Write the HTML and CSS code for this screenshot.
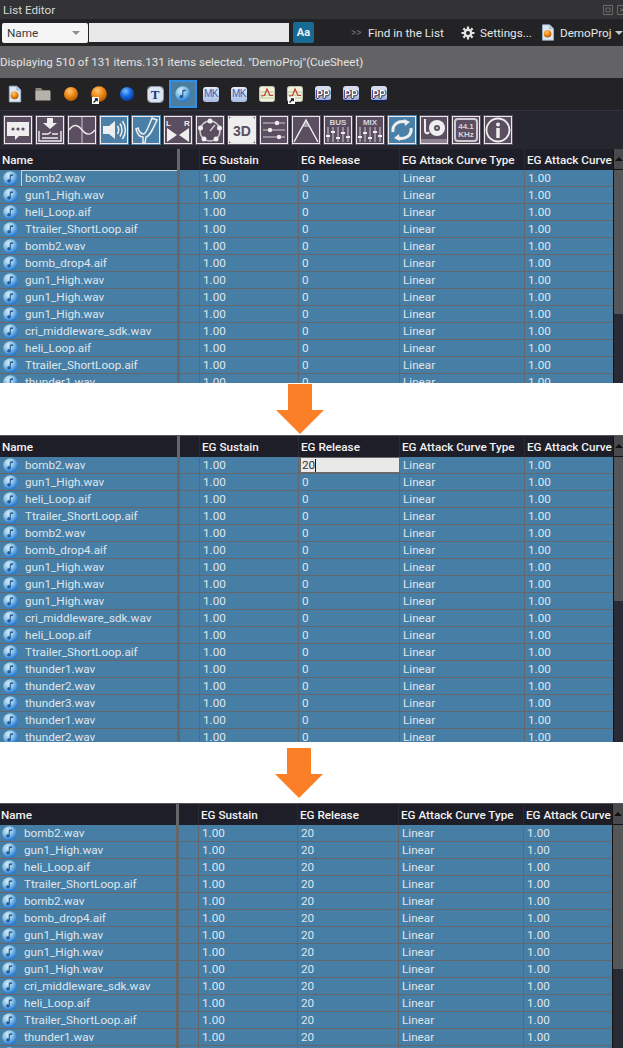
FILE: index.html
```html
<!DOCTYPE html>
<html lang="en">
<head>
<meta charset="utf-8">
<title>List Editor</title>
<link rel="stylesheet" href="styles.css">
</head>
<body>
<svg class="defs" aria-hidden="true">
  <defs>
    <radialGradient id="gNote" cx="38%" cy="30%" r="75%"><stop offset="0" stop-color="#d8eef6"/><stop offset="0.45" stop-color="#8cc4e4"/><stop offset="0.8" stop-color="#3a8ad8"/><stop offset="1" stop-color="#1f6ccc"/></radialGradient>
    <radialGradient id="gOrange" cx="40%" cy="30%" r="75%"><stop offset="0" stop-color="#ffc77a"/><stop offset="0.5" stop-color="#f08a12"/><stop offset="1" stop-color="#a85206"/></radialGradient>
    <radialGradient id="gBlue" cx="40%" cy="30%" r="75%"><stop offset="0" stop-color="#7cc0ff"/><stop offset="0.5" stop-color="#1668e0"/><stop offset="1" stop-color="#0a3590"/></radialGradient>
    <symbol id="note" viewBox="0 0 14 14"><circle cx="7" cy="7" r="6.800" fill="url(#gNote)"/><path d="M6.300 3.600 9.400 3V4.400L7.300 4.900V9.200A1.700 1.400 0 1 1 6.300 8Z" fill="#2358a0"/></symbol>
    <symbol id="doc" viewBox="0 0 16 20"><path d="M1.500 1H10L14.500 5.500V19H1.500Z" fill="#dfe9f5" stroke="#9db4cc"/><path d="M10 1V5.500H14.500" fill="#b9cce0" stroke="#9db4cc"/><circle cx="7.500" cy="11.500" r="4.500" fill="url(#gOrange)"/></symbol>
    <symbol id="folder" viewBox="0 0 16 14"><path d="M0.500 1H6L7.500 3H15V13H0.500Z" fill="#8a8880"/><path d="M0.500 4H15.500V13.500H0.500Z" fill="#b4b2aa"/></symbol>
    <symbol id="orange" viewBox="0 0 16 16"><circle cx="8" cy="8" r="7" fill="url(#gOrange)"/></symbol>
    <symbol id="blue" viewBox="0 0 16 16"><circle cx="8" cy="8" r="7" fill="url(#gBlue)"/></symbol>
    <symbol id="shortcut" viewBox="0 0 7 7"><rect width="7" height="7" fill="#fff"/><path d="M1.500 5.500 4.500 2.500M2.800 1.800H5.300V4.300" fill="none" stroke="#111" stroke-width="1.200"/></symbol>
    <symbol id="chart" viewBox="0 0 16 16"><rect x="0.500" y="0.500" width="15" height="15" rx="2" fill="#f2f2dc" stroke="#c3c8b6"/><path d="M1 6H15M1 9H15M1 12H15" stroke="#b4cc98"/><path d="M2 10 5.500 9.500 8 3 11 9.500H14" fill="none" stroke="#c7382c" stroke-width="1.200"/></symbol>
    <symbol id="gear" viewBox="0 0 14 14"><circle cx="7" cy="7" r="3.200" fill="none" stroke="#e4e4e4" stroke-width="2.400"/><path d="M7 0.500V3M7 11V13.500M0.500 7H3M11 7H13.500M2.400 2.400 4.200 4.200M9.800 9.800 11.600 11.600M11.600 2.400 9.800 4.200M4.200 9.800 2.400 11.600" stroke="#e4e4e4" stroke-width="2.200"/></symbol>
    <symbol id="splitdown" viewBox="0 0 48 50"><path d="M12 0H36V26H48L24 50 0 26H12Z" fill="#fb7f27"/></symbol>
  </defs>
</svg>

<header class="titlebar">
  <span>List Editor</span>
  <span class="winbtns">
    <svg class="winicon" viewBox="0 0 10 10"><path d="M0.500 0.500H9.500V9.500H0.500ZM3 3H7V7H3Z" fill="none" stroke="#6a6a6a"/></svg>
    <svg class="winicon" viewBox="0 0 10 10"><path d="M0.500 0.500H9.500V9.500H0.500ZM3 3 7 7M7 3 3 7" fill="none" stroke="#6a6a6a"/></svg>
  </span>
</header>

<div class="search">
  <div class="select"><span>Name</span><i class="caret"></i></div>
  <div class="field"></div>
  <div class="aa">Aa</div>
  <span class="more">&gt;&gt;</span>
  <span class="find">Find in the List</span>
  <svg class="gear"><use href="#gear"/></svg>
  <span class="settings">Settings...</span>
  <svg class="projdoc"><use href="#doc"/></svg>
  <span class="proj">DemoProj</span>
  <i class="caret caret-dark"></i>
</div>

<div class="status">Displaying 510 of 131 items.131 items selected. "DemoProj"(CueSheet)</div>

<div class="types">
  <span class="type"><svg class="ic-doc"><use href="#doc"/></svg></span>
  <span class="type"><svg class="ic-16"><use href="#folder"/></svg></span>
  <span class="type"><svg class="ic-16"><use href="#orange"/></svg></span>
  <span class="type type-short"><svg class="ic-18"><use href="#orange"/></svg><svg class="short"><use href="#shortcut"/></svg></span>
  <span class="type"><svg class="ic-16"><use href="#blue"/></svg></span>
  <span class="type"><span class="tag tag-t">T</span></span>
  <span class="type type-on"><svg class="ic-16"><use href="#note"/></svg></span>
  <span class="type"><span class="tag tag-mk">MK</span></span>
  <span class="type"><span class="tag tag-mk">MK</span></span>
  <span class="type"><svg class="ic-16"><use href="#chart"/></svg></span>
  <span class="type type-short"><svg class="ic-16"><use href="#chart"/></svg><svg class="short"><use href="#shortcut"/></svg></span>
  <span class="type"><span class="tag tag-pp">PP</span></span>
  <span class="type"><span class="tag tag-pp">PP</span></span>
  <span class="type"><span class="tag tag-pp">PP</span></span>
</div>

<div class="tools">
  <span class="tool"><svg viewBox="0 0 26 26"><path d="M2 5H24V19H14L10 23V19H2Z" fill="#eee"/><circle cx="8" cy="12" r="1.600" fill="#5a4e60"/><circle cx="13" cy="12" r="1.600" fill="#5a4e60"/><circle cx="18" cy="12" r="1.600" fill="#5a4e60"/></svg></span>
  <span class="tool"><svg viewBox="0 0 26 26"><path d="M10 1H16V6H20L13 12 6 6H10Z" fill="#eee"/><path d="M2 14V24H24V14M5 17H11L14 15M5 21H21M15 17H21" fill="none" stroke="#eee" stroke-width="1.400"/></svg></span>
  <span class="tool"><svg viewBox="0 0 26 26"><path d="M13 0V26" stroke="#a89fae" stroke-width="1.500"/><path d="M0 13C5 6 9 8 13 13S21 19 26 13" fill="none" stroke="#eee" stroke-width="1.400"/></svg></span>
  <span class="tool tool-on"><svg viewBox="0 0 26 26"><path d="M2 9H8L14 4V22L8 17H2Z" fill="#eee"/><path d="M16.500 9C18 11.500 18 14.500 16.500 17M19 6.500C21.500 10.500 21.500 15.500 19 19.500M21.500 4C25 9.500 25 16.500 21.500 22" fill="none" stroke="#eee" stroke-width="1.500"/></svg></span>
  <span class="tool tool-on"><svg viewBox="0 0 26 26"><path d="M3 12 5 11C6 15 8 17 11 17 14 15 16 8 19 1L24 3C20 12 17 19 13 20L12 26H10L10 20C6 20 4 16 3 12Z" fill="none" stroke="#eee" stroke-width="1.500"/></svg></span>
  <span class="tool"><svg viewBox="0 0 26 26"><text x="1" y="9" class="t-s">L</text><text x="19" y="9" class="t-s">R</text><path d="M2 11 12 18 2 25ZM24 11 14 18 24 25Z" fill="#eee"/></svg></span>
  <span class="tool"><svg viewBox="0 0 26 26"><circle cx="13" cy="14" r="10" fill="none" stroke="#cfcbd2" stroke-width="1.500"/><path d="M13 14 18 8" stroke="#cfcbd2" stroke-width="1.500"/><g fill="#eee"><circle cx="13" cy="4" r="2.500"/><circle cx="3.500" cy="11" r="2.500"/><circle cx="22.500" cy="11" r="2.500"/><circle cx="7" cy="22" r="2.500"/><circle cx="19" cy="22" r="2.500"/></g></svg></span>
  <span class="tool"><svg viewBox="0 0 26 26"><rect x="0" y="0" width="26" height="26" rx="3" fill="#eee"/><text x="13" y="19" text-anchor="middle" class="t-3d">3D</text></svg></span>
  <span class="tool"><svg viewBox="0 0 26 26"><path d="M2 6H24M2 13H24M2 20H24" stroke="#cfcbd2" stroke-width="1.200"/><g fill="#eee"><circle cx="16" cy="6" r="2.200"/><circle cx="9" cy="13" r="2.200"/><circle cx="18" cy="20" r="2.200"/></g></svg></span>
  <span class="tool"><svg viewBox="0 0 26 26"><path d="M1 25 13 3 25 25 16 10H10Z" fill="#a89fae"/><path d="M1 25 13 3 25 25" fill="none" stroke="#eee" stroke-width="1.400"/></svg></span>
  <span class="tool"><svg viewBox="0 0 26 26"><text x="13" y="8" text-anchor="middle" class="t-b">BUS</text><path d="M3 10V25M8 10V25M13 10V25M18 10V25M23 10V25" stroke="#cfcbd2"/><path d="M1 19H5M6 15H10M11 21H15M16 16H20M21 20H25" stroke="#eee" stroke-width="2"/></svg></span>
  <span class="tool"><svg viewBox="0 0 26 26"><text x="13" y="8" text-anchor="middle" class="t-b">MIX</text><path d="M3 10V25M8 10V25M13 10V25M18 10V25M23 10V25" stroke="#cfcbd2"/><path d="M1 20H5M6 16H10M11 21H15M16 15H20M21 19H25" stroke="#eee" stroke-width="2"/></svg></span>
  <span class="tool tool-on"><svg viewBox="0 0 26 26"><path d="M4 15C3 8 9 3 17 5M22 11C23 18 17 23 9 21" fill="none" stroke="#eee" stroke-width="3"/><path d="M15 2 21 5 16 9ZM11 24 5 21 10 17Z" fill="#eee"/></svg></span>
  <span class="tool"><svg viewBox="0 0 26 26"><path d="M0 22H26V26H0Z" fill="#8e8494"/><path d="M4 2V13C4 17 7 17 8 15" fill="none" stroke="#eee" stroke-width="2"/><circle cx="16" cy="11" r="8" fill="#eee"/><circle cx="16" cy="11" r="3" fill="#5a4e60"/><circle cx="16" cy="11" r="1" fill="#eee"/></svg></span>
  <span class="tool"><svg viewBox="0 0 26 26"><rect x="2" y="2" width="22" height="22" rx="3" fill="none" stroke="#cfcbd2" stroke-width="2"/><text x="13" y="12" text-anchor="middle" class="t-b">44.1</text><text x="13" y="20" text-anchor="middle" class="t-b">KHz</text></svg></span>
  <span class="tool"><svg viewBox="0 0 26 26"><circle cx="13" cy="13" r="11.500" fill="none" stroke="#eee" stroke-width="1.800"/><circle cx="13" cy="7.500" r="2" fill="#eee"/><path d="M13 11V21" stroke="#eee" stroke-width="3.500"/></svg></span>
</div>

<section class="panel panel-a">
  <div class="list">
    <div class="row head"><span class="c n">Name</span><span class="c g"></span><span class="c">EG Sustain</span><span class="c">EG Release</span><span class="c">EG Attack Curve Type</span><span class="c">EG Attack Curve</span></div>
    <div class="row"><span class="c n"><svg class="note"><use href="#note"/></svg><span class="focus">bomb2.wav</span></span><span class="c g"></span><span class="c">1.00</span><span class="c">0</span><span class="c">Linear</span><span class="c">1.00</span></div>
    <div class="row"><span class="c n"><svg class="note"><use href="#note"/></svg>gun1_High.wav</span><span class="c g"></span><span class="c">1.00</span><span class="c">0</span><span class="c">Linear</span><span class="c">1.00</span></div>
    <div class="row"><span class="c n"><svg class="note"><use href="#note"/></svg>heli_Loop.aif</span><span class="c g"></span><span class="c">1.00</span><span class="c">0</span><span class="c">Linear</span><span class="c">1.00</span></div>
    <div class="row"><span class="c n"><svg class="note"><use href="#note"/></svg>Ttrailer_ShortLoop.aif</span><span class="c g"></span><span class="c">1.00</span><span class="c">0</span><span class="c">Linear</span><span class="c">1.00</span></div>
    <div class="row"><span class="c n"><svg class="note"><use href="#note"/></svg>bomb2.wav</span><span class="c g"></span><span class="c">1.00</span><span class="c">0</span><span class="c">Linear</span><span class="c">1.00</span></div>
    <div class="row"><span class="c n"><svg class="note"><use href="#note"/></svg>bomb_drop4.aif</span><span class="c g"></span><span class="c">1.00</span><span class="c">0</span><span class="c">Linear</span><span class="c">1.00</span></div>
    <div class="row"><span class="c n"><svg class="note"><use href="#note"/></svg>gun1_High.wav</span><span class="c g"></span><span class="c">1.00</span><span class="c">0</span><span class="c">Linear</span><span class="c">1.00</span></div>
    <div class="row"><span class="c n"><svg class="note"><use href="#note"/></svg>gun1_High.wav</span><span class="c g"></span><span class="c">1.00</span><span class="c">0</span><span class="c">Linear</span><span class="c">1.00</span></div>
    <div class="row"><span class="c n"><svg class="note"><use href="#note"/></svg>gun1_High.wav</span><span class="c g"></span><span class="c">1.00</span><span class="c">0</span><span class="c">Linear</span><span class="c">1.00</span></div>
    <div class="row"><span class="c n"><svg class="note"><use href="#note"/></svg>cri_middleware_sdk.wav</span><span class="c g"></span><span class="c">1.00</span><span class="c">0</span><span class="c">Linear</span><span class="c">1.00</span></div>
    <div class="row"><span class="c n"><svg class="note"><use href="#note"/></svg>heli_Loop.aif</span><span class="c g"></span><span class="c">1.00</span><span class="c">0</span><span class="c">Linear</span><span class="c">1.00</span></div>
    <div class="row"><span class="c n"><svg class="note"><use href="#note"/></svg>Ttrailer_ShortLoop.aif</span><span class="c g"></span><span class="c">1.00</span><span class="c">0</span><span class="c">Linear</span><span class="c">1.00</span></div>
    <div class="row"><span class="c n"><svg class="note"><use href="#note"/></svg>thunder1.wav</span><span class="c g"></span><span class="c">1.00</span><span class="c">0</span><span class="c">Linear</span><span class="c">1.00</span></div>
  </div>
  <div class="scroll"><i class="up"></i><i class="thumb"></i></div>
</section>

<div class="gap gap-a"><svg class="arrow"><use href="#splitdown"/></svg></div>

<section class="panel panel-b">
  <div class="list">
    <div class="row head"><span class="c n">Name</span><span class="c g"></span><span class="c">EG Sustain</span><span class="c">EG Release</span><span class="c">EG Attack Curve Type</span><span class="c">EG Attack Curve</span></div>
    <div class="row"><span class="c n"><svg class="note"><use href="#note"/></svg>bomb2.wav</span><span class="c g"></span><span class="c">1.00</span><span class="c edit">20<i class="cursor"></i></span><span class="c">Linear</span><span class="c">1.00</span></div>
    <div class="row"><span class="c n"><svg class="note"><use href="#note"/></svg>gun1_High.wav</span><span class="c g"></span><span class="c">1.00</span><span class="c">0</span><span class="c">Linear</span><span class="c">1.00</span></div>
    <div class="row"><span class="c n"><svg class="note"><use href="#note"/></svg>heli_Loop.aif</span><span class="c g"></span><span class="c">1.00</span><span class="c">0</span><span class="c">Linear</span><span class="c">1.00</span></div>
    <div class="row"><span class="c n"><svg class="note"><use href="#note"/></svg>Ttrailer_ShortLoop.aif</span><span class="c g"></span><span class="c">1.00</span><span class="c">0</span><span class="c">Linear</span><span class="c">1.00</span></div>
    <div class="row"><span class="c n"><svg class="note"><use href="#note"/></svg>bomb2.wav</span><span class="c g"></span><span class="c">1.00</span><span class="c">0</span><span class="c">Linear</span><span class="c">1.00</span></div>
    <div class="row"><span class="c n"><svg class="note"><use href="#note"/></svg>bomb_drop4.aif</span><span class="c g"></span><span class="c">1.00</span><span class="c">0</span><span class="c">Linear</span><span class="c">1.00</span></div>
    <div class="row"><span class="c n"><svg class="note"><use href="#note"/></svg>gun1_High.wav</span><span class="c g"></span><span class="c">1.00</span><span class="c">0</span><span class="c">Linear</span><span class="c">1.00</span></div>
    <div class="row"><span class="c n"><svg class="note"><use href="#note"/></svg>gun1_High.wav</span><span class="c g"></span><span class="c">1.00</span><span class="c">0</span><span class="c">Linear</span><span class="c">1.00</span></div>
    <div class="row"><span class="c n"><svg class="note"><use href="#note"/></svg>gun1_High.wav</span><span class="c g"></span><span class="c">1.00</span><span class="c">0</span><span class="c">Linear</span><span class="c">1.00</span></div>
    <div class="row"><span class="c n"><svg class="note"><use href="#note"/></svg>cri_middleware_sdk.wav</span><span class="c g"></span><span class="c">1.00</span><span class="c">0</span><span class="c">Linear</span><span class="c">1.00</span></div>
    <div class="row"><span class="c n"><svg class="note"><use href="#note"/></svg>heli_Loop.aif</span><span class="c g"></span><span class="c">1.00</span><span class="c">0</span><span class="c">Linear</span><span class="c">1.00</span></div>
    <div class="row"><span class="c n"><svg class="note"><use href="#note"/></svg>Ttrailer_ShortLoop.aif</span><span class="c g"></span><span class="c">1.00</span><span class="c">0</span><span class="c">Linear</span><span class="c">1.00</span></div>
    <div class="row"><span class="c n"><svg class="note"><use href="#note"/></svg>thunder1.wav</span><span class="c g"></span><span class="c">1.00</span><span class="c">0</span><span class="c">Linear</span><span class="c">1.00</span></div>
    <div class="row"><span class="c n"><svg class="note"><use href="#note"/></svg>thunder2.wav</span><span class="c g"></span><span class="c">1.00</span><span class="c">0</span><span class="c">Linear</span><span class="c">1.00</span></div>
    <div class="row"><span class="c n"><svg class="note"><use href="#note"/></svg>thunder3.wav</span><span class="c g"></span><span class="c">1.00</span><span class="c">0</span><span class="c">Linear</span><span class="c">1.00</span></div>
    <div class="row"><span class="c n"><svg class="note"><use href="#note"/></svg>thunder1.wav</span><span class="c g"></span><span class="c">1.00</span><span class="c">0</span><span class="c">Linear</span><span class="c">1.00</span></div>
    <div class="row"><span class="c n"><svg class="note"><use href="#note"/></svg>thunder2.wav</span><span class="c g"></span><span class="c">1.00</span><span class="c">0</span><span class="c">Linear</span><span class="c">1.00</span></div>
  </div>
  <div class="scroll"><i class="up"></i><i class="thumb"></i></div>
</section>

<div class="gap gap-b"><svg class="arrow"><use href="#splitdown"/></svg></div>

<section class="panel panel-c">
  <div class="list">
    <div class="row head"><span class="c n">Name</span><span class="c g"></span><span class="c">EG Sustain</span><span class="c">EG Release</span><span class="c">EG Attack Curve Type</span><span class="c">EG Attack Curve</span></div>
    <div class="row"><span class="c n"><svg class="note"><use href="#note"/></svg>bomb2.wav</span><span class="c g"></span><span class="c">1.00</span><span class="c">20</span><span class="c">Linear</span><span class="c">1.00</span></div>
    <div class="row"><span class="c n"><svg class="note"><use href="#note"/></svg>gun1_High.wav</span><span class="c g"></span><span class="c">1.00</span><span class="c">20</span><span class="c">Linear</span><span class="c">1.00</span></div>
    <div class="row"><span class="c n"><svg class="note"><use href="#note"/></svg>heli_Loop.aif</span><span class="c g"></span><span class="c">1.00</span><span class="c">20</span><span class="c">Linear</span><span class="c">1.00</span></div>
    <div class="row"><span class="c n"><svg class="note"><use href="#note"/></svg>Ttrailer_ShortLoop.aif</span><span class="c g"></span><span class="c">1.00</span><span class="c">20</span><span class="c">Linear</span><span class="c">1.00</span></div>
    <div class="row"><span class="c n"><svg class="note"><use href="#note"/></svg>bomb2.wav</span><span class="c g"></span><span class="c">1.00</span><span class="c">20</span><span class="c">Linear</span><span class="c">1.00</span></div>
    <div class="row"><span class="c n"><svg class="note"><use href="#note"/></svg>bomb_drop4.aif</span><span class="c g"></span><span class="c">1.00</span><span class="c">20</span><span class="c">Linear</span><span class="c">1.00</span></div>
    <div class="row"><span class="c n"><svg class="note"><use href="#note"/></svg>gun1_High.wav</span><span class="c g"></span><span class="c">1.00</span><span class="c">20</span><span class="c">Linear</span><span class="c">1.00</span></div>
    <div class="row"><span class="c n"><svg class="note"><use href="#note"/></svg>gun1_High.wav</span><span class="c g"></span><span class="c">1.00</span><span class="c">20</span><span class="c">Linear</span><span class="c">1.00</span></div>
    <div class="row"><span class="c n"><svg class="note"><use href="#note"/></svg>gun1_High.wav</span><span class="c g"></span><span class="c">1.00</span><span class="c">20</span><span class="c">Linear</span><span class="c">1.00</span></div>
    <div class="row"><span class="c n"><svg class="note"><use href="#note"/></svg>cri_middleware_sdk.wav</span><span class="c g"></span><span class="c">1.00</span><span class="c">20</span><span class="c">Linear</span><span class="c">1.00</span></div>
    <div class="row"><span class="c n"><svg class="note"><use href="#note"/></svg>heli_Loop.aif</span><span class="c g"></span><span class="c">1.00</span><span class="c">20</span><span class="c">Linear</span><span class="c">1.00</span></div>
    <div class="row"><span class="c n"><svg class="note"><use href="#note"/></svg>Ttrailer_ShortLoop.aif</span><span class="c g"></span><span class="c">1.00</span><span class="c">20</span><span class="c">Linear</span><span class="c">1.00</span></div>
    <div class="row"><span class="c n"><svg class="note"><use href="#note"/></svg>thunder1.wav</span><span class="c g"></span><span class="c">1.00</span><span class="c">20</span><span class="c">Linear</span><span class="c">1.00</span></div>
    <div class="row"><span class="c n"><svg class="note"><use href="#note"/></svg>thunder2.wav</span><span class="c g"></span><span class="c">1.00</span><span class="c">20</span><span class="c">Linear</span><span class="c">1.00</span></div>
  </div>
  <div class="scroll"><i class="up"></i><i class="thumb"></i></div>
</section>
</body>
</html>
```
FILE: styles.css
```css
* { box-sizing: border-box; }
html, body { margin: 0; padding: 0; }
body {
  width: 623px;
  height: 1048px;
  overflow: hidden;
  background: #fff;
  font-family: Roboto, "Noto Sans", sans-serif;
  font-size: 11.7px;
  color: #dfe6ec;
}
.defs { display: block; width: 0; height: 0; }

.titlebar {
  height: 19px;
  background: #333335;
  display: flex;
  align-items: center;
  justify-content: space-between;
  padding: 0 0 0 3px;
  color: #d8d8d8;
}
.winbtns { display: flex; gap: 4px; margin-right: -4px; }
.winicon { width: 10px; height: 10px; display: block; }

.search {
  height: 27px;
  background: #232325;
  display: flex;
  align-items: center;
  padding-left: 2px;
  color: #e6e6e6;
  white-space: nowrap;
}
.search > * { flex: none; }
.select {
  width: 86px;
  height: 20px;
  background: #f5f5f5;
  border-radius: 2px;
  display: flex;
  align-items: center;
  justify-content: space-between;
  padding: 0 8px 0 5px;
  color: #3a3a3a;
}
.caret { width: 0; height: 0; border: 4px solid transparent; border-top: 4px solid #8d8d8d; border-bottom: 0; display: block; }
.field { width: 200px; height: 19px; margin-left: 1px; background: #e9e9e9; }
.aa {
  width: 21px;
  height: 21px;
  margin-left: 4px;
  background: #176a93;
  border-radius: 2px;
  color: #e8f2f7;
  font-weight: 700;
  font-size: 11px;
  display: flex;
  align-items: center;
  justify-content: center;
}
.more { margin-left: 37px; width: 11px; color: #777; font-size: 10px; }
.find { margin-left: 6px; width: 77px; }
.gear { width: 14px; height: 14px; margin-left: 16px; }
.settings { margin-left: 5px; width: 50px; }
.projdoc { width: 14px; height: 17px; margin-left: 11px; }
.proj { margin-left: 5px; width: 53px; }
.caret-dark { margin-left: 2px; border-top-color: #c8c8c8; }

.status {
  height: 32px;
  background: #636366;
  display: flex;
  align-items: center;
  color: #e3e3e3;
  font-size: 11.5px;
  white-space: nowrap;
}

.types {
  height: 32px;
  background: #232325;
  display: flex;
  align-items: center;
  padding-left: 1px;
}
.type {
  width: 28px;
  height: 28px;
  display: flex;
  align-items: center;
  justify-content: center;
  position: relative;
}
.type-on { background: #4d7d9c; border: 2px solid #2f8ee8; }
.ic-16 { width: 16px; height: 16px; display: block; }
.ic-18 { width: 18px; height: 18px; display: block; }
.ic-doc { width: 14px; height: 18px; display: block; }
.short { width: 7px; height: 7px; position: absolute; left: 7px; bottom: 4px; }
.tag {
  width: 15px;
  height: 15px;
  border-radius: 3px;
  display: flex;
  align-items: center;
  justify-content: center;
  font-family: "Liberation Sans", sans-serif;
  line-height: 1;
}
.tag-t { background: #dce4f2; color: #123a86; font-family: "Liberation Serif", serif; font-weight: 700; font-size: 13px; outline: 1px solid #8a97ae; }
.tag-mk { background: linear-gradient(#e6ecf8, #a9bde4); color: #2a66b8; font-size: 10px; letter-spacing: -0.5px; width: 16px; height: 15px; }
.tag-pp {
  width: 16px;
  height: 16px;
  background: linear-gradient(#d6dcef 50%, #9aa6cc);
  border-bottom: 2px solid #0e1c50;
  color: #fff;
  font-size: 10px;
  font-weight: 700;
  align-items: flex-end;
  text-shadow: 1px 0 0 #0e1c50, -1px 0 0 #0e1c50, 0 1px 0 #0e1c50;
}

.tools {
  height: 39px;
  background: #26262e;
  border-top: 1px solid #2e3242;
  display: flex;
  align-items: center;
  gap: 2px;
  padding-left: 3px;
}
.tool {
  width: 30px;
  height: 30px;
  background: #5a4e60;
  padding: 1px;
  display: block;
}
.tool svg {
  display: block;
  width: 28px;
  height: 28px;
  border: 1px solid #ece8ee;
  overflow: hidden;
}
.tool-on { background: #4a7fa8; }
.t-s { font: 700 8px "Liberation Sans", sans-serif; fill: #eee; }
.t-b { font: 700 8px "Liberation Sans", sans-serif; fill: #d8d4dc; }
.t-3d { font: 700 14px "Liberation Sans", sans-serif; fill: #5a4e60; }

.panel {
  display: flex;
  overflow: hidden;
  background: #222226;
}
.panel-a { height: 234px; }
.panel-b { height: 307px; border-top: 1px solid #55555c; }
.panel-c { height: 245px; margin-left: -1px; width: 624px; border-top: 1px solid #55555c; }

.list { width: 613px; flex: none; }
.row {
  display: grid;
  grid-template-columns: 180px 20px 99px 101px 125px 88px;
  height: 17px;
  background: #477ea6;
  border-bottom: 1px solid #64666b;
}
.c {
  display: flex;
  align-items: center;
  padding: 1px 0 0 3px;
  border-right: 1px solid #64666b;
  white-space: nowrap;
  overflow: hidden;
  line-height: 15px;
}
.row .c:last-child { border-right: 0; }
.n {
  padding: 1px 0 0 3px;
  border-right: 3px solid #66666b;
}
.note { width: 15px; height: 15px; flex: none; margin: -1px 7px 0 0; }
.focus {
  width: 156px;
  height: 17px;
  margin-left: -4px;
  padding-left: 3px;
  border: 1px solid #c9d4dc;
  border-right: 0;
  display: flex;
  align-items: center;
}
.g { padding: 0; }
.edit {
  background: #e9e9e9;
  color: #333;
  border: 1px solid #6a6a6a;
  padding: 0 0 0 1px;
  margin-left: 1px;
}
.cursor { width: 1px; height: 13px; background: #111; display: block; }

.head {
  height: 21px;
  background: #1e1e28;
  border-bottom: 0;
  color: #f2f2f2;
  font-weight: 500;
}
.head .c { padding-left: 2px; border-right-color: #2b2b33; }
.head .n { border-right-color: #66666b; }

.scroll {
  flex: 1;
  display: flex;
  flex-direction: column;
  background: #2a2a34;
  border-left: 1px solid #141416;
}
.up {
  height: 21px;
  flex: none;
  background: #4a4a4c;
  border-bottom: 1px solid #141416;
  display: flex;
  align-items: center;
  justify-content: center;
}
.up::before { content: ""; border: 4px solid transparent; border-bottom: 4px solid #111; border-top: 0; }
.thumb { display: block; flex: none; height: 144px; background: #565659; }

.gap { display: flex; justify-content: center; align-items: center; background: #fff; }
.gap-a { height: 52px; padding-right: 23px; }
.gap-b { height: 61px; padding-right: 25px; }
.arrow { width: 48px; height: 50px; display: block; }
```
